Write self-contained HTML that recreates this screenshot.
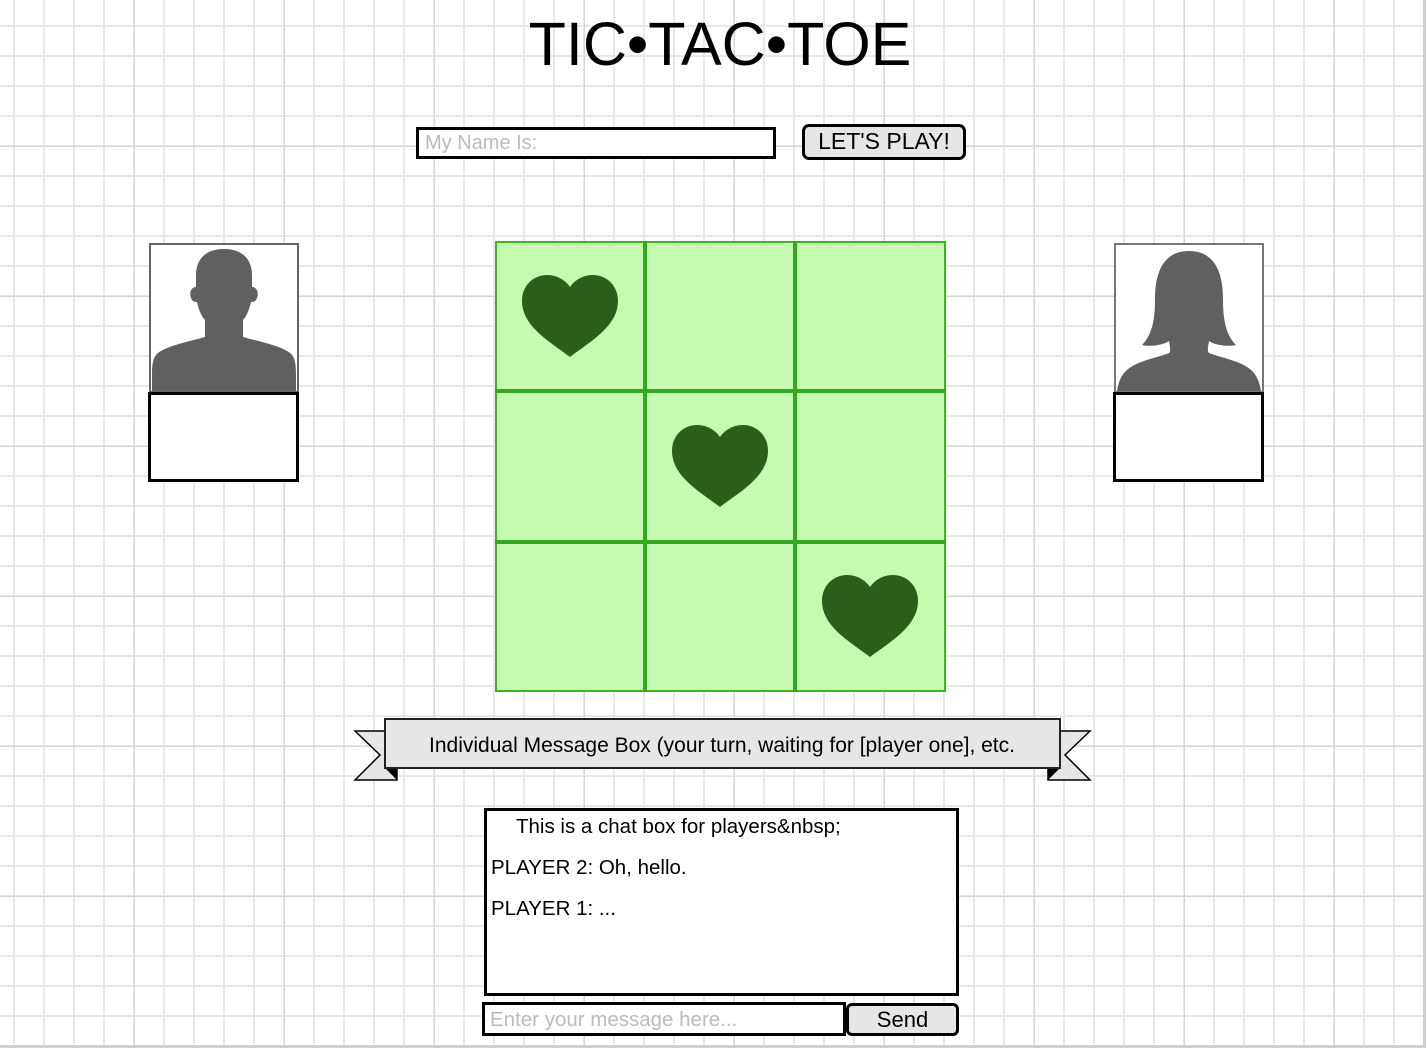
<!DOCTYPE html>
<html><head><meta charset="utf-8"><style>
html,body{margin:0;padding:0}
body{width:1426px;height:1048px;position:relative;overflow:hidden;font-family:"Liberation Sans",Arial,sans-serif;
background-color:#fff;
background-image:
linear-gradient(to right,#d6d6d6 1px,transparent 1px),
linear-gradient(to bottom,#d6d6d6 1px,transparent 1px),
linear-gradient(to right,#e8e8e8 2px,transparent 2px),
linear-gradient(to bottom,#e8e8e8 2px,transparent 2px);
background-size:150px 150px,150px 150px,30px 30px,30px 30px;
background-position:134px 0,0 146px,13px 0,0 25px;}
.a{position:absolute;box-sizing:border-box}
</style></head><body>
<div class="a" style="left:0;top:1045px;width:1426px;height:3px;background:#d0d0d0"></div>
<div class="a" style="left:1423px;top:0;width:3px;height:1048px;background:#d0d0d0"></div>

<div class="a" style="left:420px;top:8px;width:600px;text-align:center;font-size:61px;line-height:72px;color:#000">TIC•TAC•TOE</div>

<div class="a" style="left:416px;top:127px;width:360px;height:32px;border:3px solid #000;background:#fff;font-size:20px;color:#bbb;padding:2px 0 0 6px;line-height:22px">My Name Is:</div>
<div class="a" style="left:802px;top:124px;width:164px;height:36px;border:3px solid #000;border-radius:7px;background:#e6e6e6;font-size:23px;text-align:center;line-height:28px">LET'S PLAY!</div>

<!-- left avatar -->
<div class="a" style="left:149px;top:243px;width:150px;height:150px;border:2px solid #666;background:#fff;overflow:hidden">
<svg width="146" height="146" viewBox="0 0 146 146"><path fill="#606060" d="M73 4C55 4 45 14 45 30V42C40 42 38 48 40 53C41 56 43 57 46 57C48 66 51 72 54 75V92C40 96 20 100 10 106C2 110 1 118 1 130V146H145V130C145 118 144 110 136 106C126 100 106 96 92 92V75C95 72 98 66 100 57C103 57 105 56 106 53C108 48 106 42 101 42V30C101 14 91 4 73 4Z"/></svg>
</div>
<div class="a" style="left:148px;top:392px;width:151px;height:90px;border:3px solid #000;background:#fff"></div>

<!-- right avatar -->
<div class="a" style="left:1114px;top:243px;width:150px;height:150px;border:2px solid #777;background:#fff;overflow:hidden">
<svg width="146" height="146" viewBox="0 0 146 146"><path fill="#606060" d="M73 6c-26 0-34 22-34 48 0 18-2 35-13 46 8 2 22 0 27-4 1 6 2 10 0 12-10 4-30 8-38 14-8 5-12 12-14 24h144c-2-12-6-19-14-24-8-6-28-10-38-14-2-2-1-6 0-12 5 4 19 6 27 4-11-11-13-28-13-46 0-26-8-48-34-48z"/></svg>
</div>
<div class="a" style="left:1113px;top:392px;width:151px;height:90px;border:3px solid #000;background:#fff"></div>

<!-- board -->
<div class="a" style="left:495px;top:241px;width:451px;height:451px;background:#c5fbb0;border:2px solid #3cb521"></div>
<div class="a" style="left:643px;top:241px;width:4px;height:451px;background:#35a821"></div>
<div class="a" style="left:793px;top:241px;width:4px;height:451px;background:#35a821"></div>
<div class="a" style="left:495px;top:389px;width:451px;height:4px;background:#35a821"></div>
<div class="a" style="left:495px;top:540px;width:451px;height:4px;background:#35a821"></div>
<svg class="a" style="left:0;top:0" width="1426" height="1048">
<defs><path id="h" d="M48 82C30 68 0 52 0 26 0 10 12 0 25 0c11 0 19 6 23 12 4-6 12-12 23-12 13 0 25 10 25 26 0 26-30 42-48 56z" fill="#2b5e1a"/></defs>
<use href="#h" x="522" y="275"/>
<use href="#h" x="672" y="425"/>
<use href="#h" x="822" y="575"/>
<polygon points="355,731 397,731 397,780 355,780 380,755" fill="#e6e6e6" stroke="#000" stroke-width="1.5"/>
<polygon points="385,768 397,768 397,780" fill="#000"/>
<polygon points="1090,731 1048,731 1048,780 1090,780 1065,755" fill="#e6e6e6" stroke="#000" stroke-width="1.5"/>
<polygon points="1060,768 1048,768 1048,780" fill="#000"/>
<rect x="385" y="719" width="675" height="49" fill="#e6e6e6" stroke="#222" stroke-width="2"/>
<text x="722" y="752" text-anchor="middle" font-family="Liberation Sans, sans-serif" font-size="21" fill="#000">Individual Message Box (your turn, waiting for [player one], etc.</text>
</svg>

<!-- chat -->
<div class="a" style="left:484px;top:808px;width:475px;height:188px;border:3px solid #000;background:#fff;font-size:20.5px;line-height:24px;padding:4px 0 0 4px">
<div style="padding-left:25px">This is a chat box for players&amp;nbsp;</div>
<div style="margin-top:17px">PLAYER 2: Oh, hello.</div>
<div style="margin-top:17px">PLAYER 1: ...</div>
</div>
<div class="a" style="left:482px;top:1002px;width:364px;height:34px;border:3px solid #000;background:#fff;font-size:20.5px;color:#bbb;padding:4px 0 0 5px;line-height:22px">Enter your message here...</div>
<div class="a" style="left:846px;top:1003px;width:113px;height:33px;border:3px solid #000;border-radius:6px;background:#e6e6e6;font-size:22px;text-align:center;line-height:27px">Send</div>
</body></html>
